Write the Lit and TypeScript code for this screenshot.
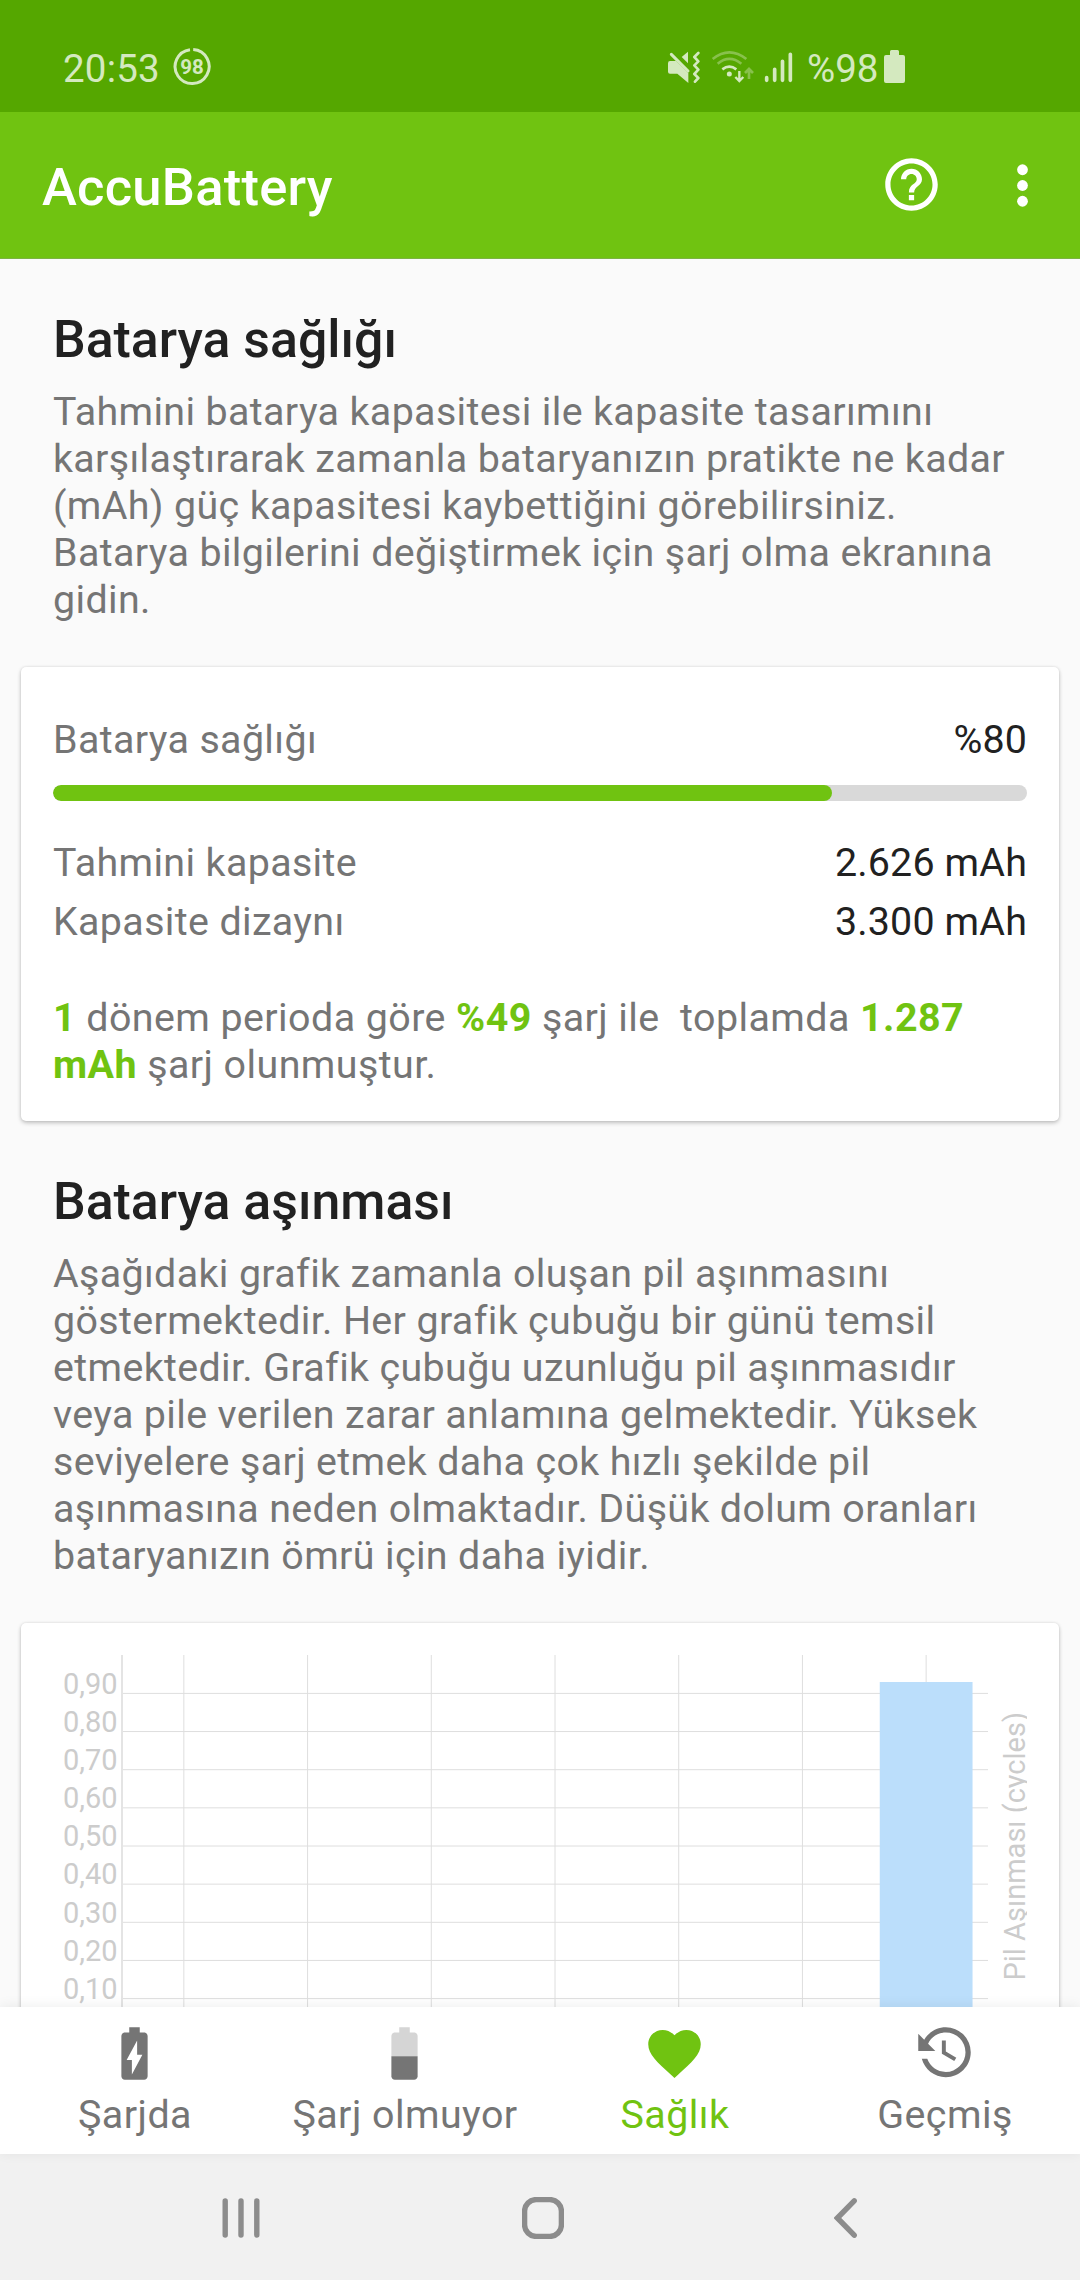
import { LitElement, html, svg, css } from "lit";
import { customElement, property } from "lit/decorators.js";
import { classMap } from "lit/directives/class-map.js";

@customElement("status-bar")
class StatusBar extends LitElement {
  static styles = css`
    :host {
      display: flex;
      align-items: flex-start;
      height: 112px;
      box-sizing: border-box;
      padding-left: 63px;
      background: #55a700;
      color: #d4e9bf;
      font-size: 38.5px;
      line-height: 46px;
    }
    svg { display: block; flex: none; }
    .time { width: 96px; margin-top: 46px; margin-right: 13px; white-space: nowrap; letter-spacing: 0.2px; }
    .level { margin-top: 47px; margin-right: 456px; }
    .ring-text { font: 700 20.5px Roboto, sans-serif; }
    .mute { margin-top: 50px; margin-right: 11px; }
    .wifi { margin-top: 50px; margin-right: 10px; }
    .signal { margin-top: 52px; margin-right: 13px; }
    .percent { width: 77px; margin-top: 46px; white-space: nowrap; }
    .battery { margin-top: 50px; }
  `;
  render() {
    return html`
      <span class="time">20:53</span>
      <svg class="level" width="40" height="40" viewBox="0 0 40 40">
        <path d="M21.2 2.6A17 17 0 1 1 18 2.700" fill="none" stroke="#d4e9bf" stroke-width="3" />
        <text class="ring-text" x="20" y="27.300" text-anchor="middle" fill="#d4e9bf">98</text>
      </svg>
      <svg class="mute" width="32" height="34" viewBox="84 150 96 102" fill="#d4e9bf">
        <path d="M88 183H108L145 219V249L112 221H90Q84 221 84 215V190Q84 183 90 183Z" />
        <path d="M144 155V190L125 171Z" />
        <path d="M94 163L144 213" stroke="#d4e9bf" stroke-width="9" stroke-linecap="round" />
        <path d="M174 159L162 171L174 184L162 196L174 209L162 222L174 234L164 245" fill="none" stroke="#d4e9bf" stroke-width="8" stroke-linecap="round" stroke-linejoin="round" transform="translate(1 0)" />
      </svg>
      <svg class="wifi" width="43" height="34" viewBox="213 150 129 102" fill="none" stroke="#d4e9bf" stroke-width="8">
        <g opacity=".4">
          <path d="M218 177Q268 137 319 177" />
          <path d="M233 191Q268 162 304 191" />
          <path d="M327 237V208M315 219L327 207L339 219" />
        </g>
        <path d="M247 208Q268 192 289 208" />
        <circle cx="268" cy="222" r="7.5" fill="#d4e9bf" stroke="none" />
        <path d="M298 213V242M286 231L298 243L310 231" stroke-width="7" />
      </svg>
      <svg class="signal" width="30" height="31" viewBox="372 156 90 93" stroke="#d4e9bf" stroke-width="11" stroke-linecap="round">
        <path d="M380 233V241M404 208V241M427.500 184V241M451 163V241" />
      </svg>
      <span class="percent">%98</span>
      <svg class="battery" width="21" height="33" viewBox="0 0 21 33" fill="#d4e9bf">
        <path d="M6 5V1.500Q6 0 7.500 0H13.500Q15 0 15 1.500V5H19Q21 5 21 7V31Q21 33 19 33H2Q0 33 0 31V7Q0 5 2 5Z" />
      </svg>
    `;
  }
}

@customElement("app-bar")
class AppBar extends LitElement {
  static styles = css`
    :host {
      display: flex;
      align-items: center;
      height: 147px;
      box-sizing: border-box;
      padding: 0 26px 0 42px;
      background: #70c311;
      color: #fff;
      border-bottom: 1px solid #7cb342;
    }
    .title { flex: 1; font-size: 52.5px; font-weight: 500; line-height: 62px; margin-top: 3px; letter-spacing: 0.25px; }
    svg { display: block; }
    .help { margin-bottom: 1px; }
    .more { margin: 1px 0 0 48px; }
  `;
  render() {
    return html`
      <span class="title">AccuBattery</span>
      <svg class="help" width="63" height="63" viewBox="0 0 24 24" fill="#fff">
        <path d="M11 18h2v-2h-2v2zm1-16C6.480 2 2 6.480 2 12s4.480 10 10 10 10-4.480 10-10S17.520 2 12 2zm0 18c-4.410 0-8-3.590-8-8s3.590-8 8-8 8 3.590 8 8-3.590 8-8 8zm0-14c-2.210 0-4 1.790-4 4h2c0-1.100.9-2 2-2s2 .9 2 2c0 2-3 1.750-3 5h2c0-2.250 3-2.500 3-5 0-2.210-1.790-4-4-4z" />
      </svg>
      <svg class="more" width="63" height="63" viewBox="0 0 24 24" fill="#fff">
        <circle cx="12" cy="6" r="2.050" /><circle cx="12" cy="12" r="2.050" /><circle cx="12" cy="18" r="2.050" />
      </svg>
    `;
  }
}

@customElement("info-section")
class InfoSection extends LitElement {
  @property() heading = "";
  @property({ attribute: false }) lines: string[] = [];
  static styles = css`
    :host { display: block; padding: 0 53px; }
    .heading { margin: 0 0 18px; font-size: 51.8px; font-weight: 500; line-height: 60px; color: #212121; }
    .line { font-size: 39.4px; line-height: 47px; letter-spacing: 0.36px; color: #757575; white-space: nowrap; }
  `;
  render() {
    return html`
      <h2 class="heading">${this.heading}</h2>
      ${this.lines.map((l) => html`<div class="line">${l}</div>`)}
    `;
  }
}

@customElement("health-card")
class HealthCard extends LitElement {
  static styles = css`
    :host {
      display: block;
      box-sizing: border-box;
      height: 454px;
      margin: 44px 21px 0;
      padding: 49px 32px 0;
      background: #fff;
      border-radius: 5px;
      box-shadow: 0 2px 4px rgba(0, 0, 0, 0.22), 0 0 3px rgba(0, 0, 0, 0.1);
      font-size: 39.4px;
      line-height: 47px;
      letter-spacing: 0.36px;
      color: #757575;
    }
    .row { display: flex; justify-content: space-between; }
    .value { color: #212121; letter-spacing: 0.15px; }
    .track { height: 16px; margin: 22px 0 38px; border-radius: 8px; background: #d9d9d9; overflow: hidden; }
    .fill { height: 16px; border-radius: 8px; background: #70c311; }
    .design { margin-top: 12px; }
    .note { margin-top: 49px; white-space: pre; letter-spacing: 0.43px; }
    .em { font-weight: 700; color: #70c311; }
  `;
  render() {
    return html`
      <div class="row"><span>Batarya sağlığı</span><span class="value">%80</span></div>
      <div class="track"><div class="fill" style="width:80%"></div></div>
      <div class="row"><span>Tahmini kapasite</span><span class="value">2.626 mAh</span></div>
      <div class="row design"><span>Kapasite dizaynı</span><span class="value">3.300 mAh</span></div>
      <div class="note"><span class="em">1</span> dönem perioda göre <span class="em">%49</span> şarj ile  toplamda <span class="em">1.287<br>mAh</span> şarj olunmuştur.</div>
    `;
  }
}

@customElement("wear-chart")
class WearChart extends LitElement {
  static styles = css`
    :host {
      display: block;
      margin: 44px 21px 0;
      background: #fff;
      border-radius: 5px;
      box-shadow: 0 2px 4px rgba(0, 0, 0, 0.22), 0 0 3px rgba(0, 0, 0, 0.1);
    }
    svg { display: block; }
    .label { font: 400 29px Roboto, sans-serif; fill: #ccc; }
  `;
  render() {
    const rows = [0.9, 0.8, 0.7, 0.6, 0.5, 0.4, 0.3, 0.2, 0.1];
    const cols = [0, 1, 2, 3, 4, 5, 6];
    const step = 866 / 7;
    const yOf = (v: number) => 223 + (0.5 - v) * 381.5;
    return html`
      <svg width="1038" height="450" viewBox="0 0 1038 450">
        <g stroke="#dedede" stroke-width="1">
          ${cols.map((i) => svg`<path d="M${101 + (i + 0.5) * step} 32V450" />`)}
          ${rows.map((v) => svg`<path d="M101 ${yOf(v)}H967" />`)}
        </g>
        <path d="M101 32V450" stroke="#e4e4e4" stroke-width="2" />
        ${rows.map((v) => svg`<text class="label" x="96.500" y=${Math.round(yOf(v) + 0.2)} text-anchor="end">${v.toFixed(2).replace(".", ",")}</text>`)}
        <rect x=${101 + 6.5 * step - step * 0.375} y="59" width=${step * 0.75} height="391" fill="#bbdefb" />
        <svg x="975" y="80" width="31" height="290">
          <text class="label" transform="translate(29 277.500) rotate(-90)">Pil Aşınması (cycles)</text>
        </svg>
      </svg>
    `;
  }
}

const TAB_ICONS = {
  charging: svg`<path d="M15.670 4H14V2h-4v2H8.330C7.600 4 7 4.600 7 5.330v15.330C7 21.400 7.600 22 8.330 22h7.330c.740 0 1.340-.6 1.340-1.330V5.330C17 4.600 16.400 4 15.670 4zM11 20v-5.500H9L13 7v5.500h2L11 20z"/>`,
  discharging: svg`<path fill-opacity=".3" d="M17 5.330C17 4.600 16.400 4 15.670 4H14V2h-4v2H8.330C7.600 4 7 4.600 7 5.330V13h10V5.330z"/><path d="M7 13v7.670C7 21.400 7.600 22 8.330 22h7.330c.740 0 1.340-.6 1.340-1.330V13H7z"/>`,
  health: svg`<path d="M12 21.350l-1.450-1.320C5.400 15.360 2 12.280 2 8.500 2 5.420 4.420 3 7.500 3c1.740 0 3.410.81 4.500 2.090C13.090 3.810 14.760 3 16.500 3 19.580 3 22 5.420 22 8.500c0 3.780-3.400 6.860-8.550 11.540L12 21.350z"/>`,
  history: svg`<path d="M11,7V12.110L15.710,14.900L16.500,13.620L12.500,11.250V7M12.500,2C8.970,2 5.910,3.920 4.270,6.770L2,4.500V11H8.500L5.750,8.250C6.960,5.730 9.500,4 12.500,4A7.500,7.500 0 0,1 20,11.500A7.500,7.500 0 0,1 12.500,19C9.230,19 6.470,16.910 5.440,14H3.340C4.440,18.030 8.110,21 12.500,21C17.740,21 22,16.750 22,11.500A9.500,9.500 0 0,0 12.500,2Z"/>`,
};

@customElement("tab-bar")
class TabBar extends LitElement {
  static styles = css`
    :host {
      display: grid;
      grid-template-columns: repeat(4, 1fr);
      flex: none;
      height: 147px;
      position: relative;
      background: #fff;
      box-shadow: 0 -1px 12px rgba(0, 0, 0, 0.07);
    }
    .tab { display: flex; flex-direction: column; align-items: center; padding-top: 15px; color: #757575; }
    .active { color: #70c311; }
    svg { display: block; fill: currentColor; margin-right: 1px; }
    .name { margin-top: 6px; font-size: 39.4px; line-height: 47px; letter-spacing: 0.45px; white-space: nowrap; }
  `;
  render() {
    const tabs = [
      { icon: TAB_ICONS.charging, name: "Şarjda" },
      { icon: TAB_ICONS.discharging, name: "Şarj olmuyor" },
      { icon: TAB_ICONS.health, name: "Sağlık", active: true },
      { icon: TAB_ICONS.history, name: "Geçmiş" },
    ];
    return html`${tabs.map(
      (t) => html`<div class=${classMap({ tab: true, active: !!t.active })}>
        <svg width="63" height="63" viewBox="0 0 24 24">${t.icon}</svg>
        <span class="name">${t.name}</span>
      </div>`
    )}`;
  }
}

@customElement("system-nav")
class SystemNav extends LitElement {
  static styles = css`
    :host {
      display: flex;
      flex: none;
      height: 126px;
      box-sizing: border-box;
      padding: 43px 0 0 222px;
      background: #f1f1f1;
    }
    svg { display: block; fill: none; stroke: #8c8c8c; stroke-width: 5.4; stroke-linecap: round; }
    .home { margin: 0 270px 0 262px; }
  `;
  render() {
    return html`
      <svg width="38" height="42" viewBox="0 0 38 42"><path d="M3.200 4V38M19 4V38M34.800 4V38" /></svg>
      <svg class="home" width="42" height="42" viewBox="0 0 42 42"><rect x="2.600" y="2.600" width="36.800" height="36.800" rx="11.500" /></svg>
      <svg width="24" height="42" viewBox="0 0 24 42"><path d="M20.200 3.800L3.400 21L20.200 38.200" /></svg>
    `;
  }
}

@customElement("app-root")
class AppRoot extends LitElement {
  static styles = css`
    :host {
      display: flex;
      flex-direction: column;
      width: 1080px;
      height: 2280px;
      overflow: hidden;
      background: #fafafa;
      font-family: Roboto, "Noto Sans", sans-serif;
    }
    status-bar, app-bar { flex: none; }
    .content { flex: 1; min-height: 0; overflow: hidden; box-sizing: border-box; padding-top: 51px; }
    .wear { margin-top: 51px; }
  `;
  render() {
    return html`
      <status-bar></status-bar>
      <app-bar></app-bar>
      <div class="content">
        <info-section
          heading="Batarya sağlığı"
          .lines=${[
            "Tahmini batarya kapasitesi ile kapasite tasarımını",
            "karşılaştırarak zamanla bataryanızın pratikte ne kadar",
            "(mAh) güç kapasitesi kaybettiğini görebilirsiniz.",
            "Batarya bilgilerini değiştirmek için şarj olma ekranına",
            "gidin.",
          ]}
        ></info-section>
        <health-card></health-card>
        <info-section
          class="wear"
          heading="Batarya aşınması"
          .lines=${[
            "Aşağıdaki grafik zamanla oluşan pil aşınmasını",
            "göstermektedir. Her grafik çubuğu bir günü temsil",
            "etmektedir. Grafik çubuğu uzunluğu pil aşınmasıdır",
            "veya pile verilen zarar anlamına gelmektedir. Yüksek",
            "seviyelere şarj etmek daha çok hızlı şekilde pil",
            "aşınmasına neden olmaktadır. Düşük dolum oranları",
            "bataryanızın ömrü için daha iyidir.",
          ]}
        ></info-section>
        <wear-chart></wear-chart>
      </div>
      <tab-bar></tab-bar>
      <system-nav></system-nav>
    `;
  }
}
